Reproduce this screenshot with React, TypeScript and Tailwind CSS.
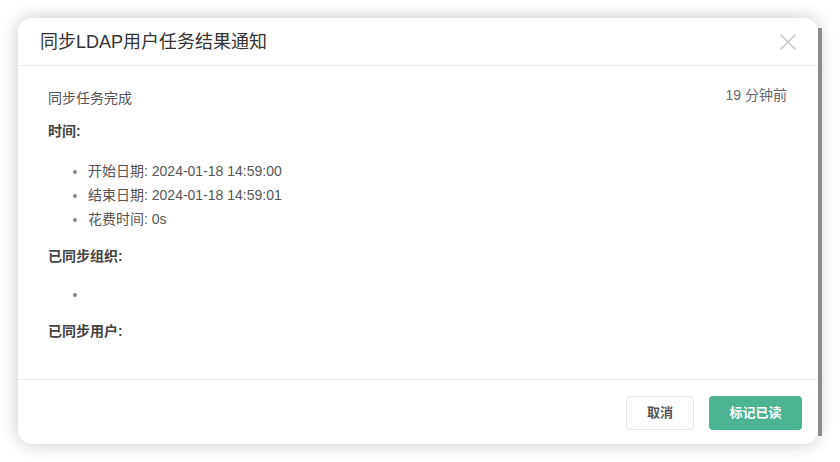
import React from 'react';
import { X } from 'lucide-react';

const font = { fontFamily: '"Liberation Sans", "Noto Sans CJK SC", sans-serif' };

const times = [
  '开始日期: 2024-01-18 14:59:00',
  '结束日期: 2024-01-18 14:59:01',
  '花费时间: 0s',
];

const App = () => {
  return (
    <div className="w-[840px] h-[462px] bg-white overflow-hidden" style={font}>
      <div className="flex items-start pt-[18px] pl-[18px]">
        {/* Dialog */}
        <div className="w-[800px] h-[426px] bg-white rounded-[14px] shadow-[0_0_18px_rgba(0,0,0,0.22)] flex flex-col">
          {/* Header */}
          <div className="h-[48px] flex items-center justify-between pl-[22px] pr-[16px] border-b border-[#ececec]">
            <div className="text-[18px] text-[#333] leading-[24px]">同步LDAP用户任务结果通知</div>
            <X className="w-[28px] h-[28px] text-[#c2c2c2]" strokeWidth={1.1} />
          </div>

          {/* Body */}
          <div className="flex-1 pl-[30px] pr-[31px] pt-[21px] text-[14px] text-[#555]">
            <div className="flex items-start justify-between">
              <div className="leading-[22px]">同步任务完成</div>
              <div className="leading-[16px] text-[#666]">19 分钟前</div>
            </div>

            <div className="mt-[11px] leading-[22px] font-bold text-[#444]">时间:</div>
            <ul className="mt-[17px] pl-[40px] list-disc marker:text-[#888] leading-[24px]">
              {times.map(t => (
                <li key={t}>{t}</li>
              ))}
            </ul>

            <div className="mt-[14px] leading-[22px] font-bold text-[#444]">已同步组织:</div>
            <ul className="mt-[15px] pl-[40px] list-disc marker:text-[#888] leading-[24px]">
              <li>&nbsp;</li>
            </ul>

            <div className="mt-[14px] leading-[22px] font-bold text-[#444]">已同步用户:</div>
          </div>

          {/* Footer */}
          <div className="h-[65px] border-t border-[#ececec] flex justify-end items-start pt-[16px] pr-[16px] gap-[15px]">
            <button className="w-[68px] h-[34px] rounded-[4px] border border-[#e2e4ea] bg-white text-[13px] font-bold text-[#555]">
              取消
            </button>
            <button className="w-[93px] h-[34px] rounded-[4px] bg-[#4cb492] text-[13px] font-bold text-white">
              标记已读
            </button>
          </div>
        </div>

        {/* page behind the dialog */}
        <div className="w-[4px] h-[408px] mt-[10px] bg-[#8c8c8c]" />
      </div>
    </div>
  );
};

export default App;
